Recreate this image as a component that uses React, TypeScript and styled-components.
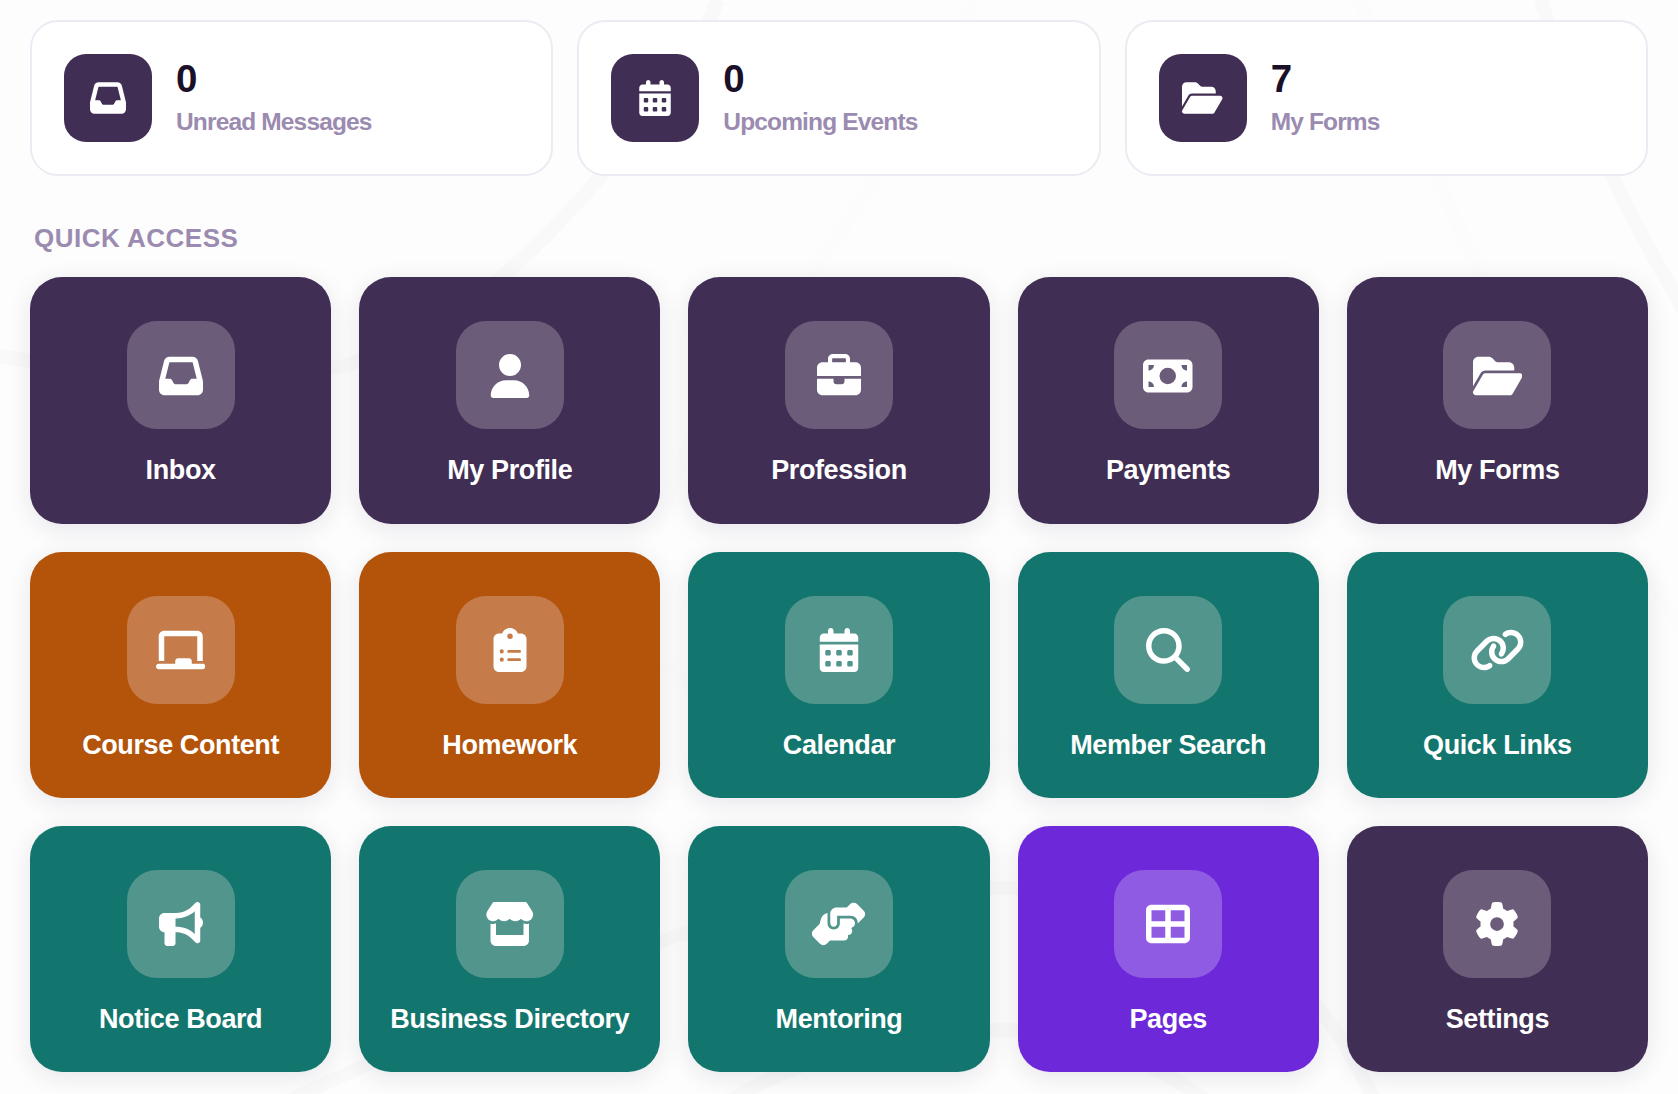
import React from 'react';
import styled, { createGlobalStyle } from 'styled-components';
import type { IconType } from 'react-icons';
import {
  FaInbox, FaCalendarDays, FaFolderOpen, FaUser, FaBriefcase, FaMoneyBill, FaChalkboard,
  FaClipboardList, FaMagnifyingGlass, FaLink, FaBullhorn, FaStore, FaHandshakeAngle,
  FaTableCellsLarge, FaGear,
} from 'react-icons/fa6';

const GlobalStyle = createGlobalStyle`
  *, *::before, *::after { box-sizing: border-box; }
  body {
    margin: 0;
    background: #fdfdfd;
    font-family: "Liberation Sans", Arial, Helvetica, sans-serif;
  }
`;

const Page = styled.main`
  position: relative;
  height: 1094px;
  padding: 20px 30px 0;
  overflow: hidden;
`;

const Backdrop = styled.svg`
  position: absolute;
  inset: 0;
  width: 100%;
  height: 100%;
  fill: none;
  stroke: #f9f9f9;
  stroke-width: 14px;
`;

const Content = styled.div`
  position: relative;
`;

const Stats = styled.section`
  display: grid;
  grid-template-columns: repeat(3, 1fr);
  gap: 24px;
`;

const StatCard = styled.article`
  display: flex;
  align-items: center;
  gap: 24px;
  height: 156px;
  padding: 0 32px;
  border: 2px solid #eeeaf3;
  border-radius: 28px;
  background: #fff;
`;

/* Glyphs share a 1em height; wide ones (576 or 640 units) overflow the 1em square. */
const IconBox = styled.div<{ $units?: number }>`
  display: flex;
  align-items: center;
  justify-content: center;
  flex-shrink: 0;

  svg {
    width: ${(p) => (p.$units ?? 512) / 512}em;
    height: 1em;
  }
`;

const StatIcon = styled(IconBox)`
  width: 88px;
  height: 88px;
  border-radius: 22px;
  background: #412e54;
  color: #fff;
  font-size: 36px;
`;

const StatText = styled.div`
  display: flex;
  flex-direction: column;
  gap: 9px;
`;

const StatValue = styled.strong`
  color: #1a1028;
  font-size: 38.5px;
  line-height: 39px;
`;

const StatLabel = styled.span`
  color: #9b8bb0;
  font-size: 24.5px;
  font-weight: 700;
  line-height: 30px;
  letter-spacing: -0.85px;
`;

const SectionTitle = styled.h2`
  margin: 47px 0 24.45px 4px;
  color: #9b8bb0;
  font-size: 26px;
  font-weight: 700;
  line-height: 30px;
  letter-spacing: 0.5px;
`;

const TileIcon = styled(IconBox)<{ $color: string }>`
  width: 108px;
  height: 108px;
  border-radius: 30px;
  background: ${(p) => p.$color};
  font-size: 44px;
`;

const Tile = styled.a<{ $color: string }>`
  display: flex;
  flex-direction: column;
  align-items: center;
  gap: 24px;
  padding-top: 44px;
  border-radius: 32px;
  background: ${(p) => p.$color};
  box-shadow: 0 5px 24px rgba(26, 16, 60, 0.1);
  color: #fff;
`;

const Tiles = styled.section`
  display: grid;
  grid-template-columns: repeat(5, 1fr);
  grid-auto-rows: 246.1px;
  gap: 28px;

  ${Tile}:nth-child(-n + 5) ${TileIcon} {
    padding-top: 1.5px;
  }
`;

const TileLabel = styled.span`
  font-size: 27px;
  font-weight: 700;
  line-height: 34px;
  letter-spacing: -0.4px;
  white-space: nowrap;
`;

interface Tone {
  base: string;
  chip: string;
}

interface Glyph {
  icon: IconType;
  units?: number;
}

const PLUM: Tone = { base: '#412e54', chip: '#6b5d7a' };
const ORANGE: Tone = { base: '#b4530a', chip: '#c57b4a' };
const TEAL: Tone = { base: '#13766e', chip: '#52958d' };
const VIOLET: Tone = { base: '#6d28d9', chip: '#8f5be2' };

const stats: (Glyph & { value: number; label: string })[] = [
  { icon: FaInbox, value: 0, label: 'Unread Messages' },
  { icon: FaCalendarDays, value: 0, label: 'Upcoming Events' },
  { icon: FaFolderOpen, units: 576, value: 7, label: 'My Forms' },
];

const tiles: (Glyph & { label: string; tone: Tone })[] = [
  { icon: FaInbox, label: 'Inbox', tone: PLUM },
  { icon: FaUser, label: 'My Profile', tone: PLUM },
  { icon: FaBriefcase, label: 'Profession', tone: PLUM },
  { icon: FaMoneyBill, units: 576, label: 'Payments', tone: PLUM },
  { icon: FaFolderOpen, units: 576, label: 'My Forms', tone: PLUM },
  { icon: FaChalkboard, units: 576, label: 'Course Content', tone: ORANGE },
  { icon: FaClipboardList, label: 'Homework', tone: ORANGE },
  { icon: FaCalendarDays, label: 'Calendar', tone: TEAL },
  { icon: FaMagnifyingGlass, label: 'Member Search', tone: TEAL },
  { icon: FaLink, units: 640, label: 'Quick Links', tone: TEAL },
  { icon: FaBullhorn, label: 'Notice Board', tone: TEAL },
  { icon: FaStore, units: 576, label: 'Business Directory', tone: TEAL },
  { icon: FaHandshakeAngle, units: 640, label: 'Mentoring', tone: TEAL },
  { icon: FaTableCellsLarge, label: 'Pages', tone: VIOLET },
  { icon: FaGear, label: 'Settings', tone: PLUM },
];

export default function App() {
  return (
    <>
      <GlobalStyle />
      <Page>
        <Backdrop viewBox="0 0 1678 1094" aria-hidden="true">
          <path d="M-10 354Q170 390 345 366Q440 335 507 272Q550 235 602 175Q680 90 718 0" />
          <path stroke="#fcfcfc" d="M975 0Q935 90 875 180L812 275Q700 390 660 520M664 665Q780 760 1000 745Q1180 740 1330 835" />
          <path stroke="#fcfcfc" d="M1360 0Q1395 95 1438 180L1482 278Q1540 400 1622 535L1684 630" />
          <path d="M1541 0Q1570 95 1614 180Q1640 235 1684 310" />
          <path d="M290 1100Q480 1010 675 936Q840 888 1005 888Q1240 890 1335 1030Q1355 1060 1375 1100" />
          <path d="M730 1100Q850 1030 1005 1030Q1110 1030 1205 1100" />
        </Backdrop>
        <Content>
          <Stats>
            {stats.map(({ icon: Icon, units, value, label }) => (
              <StatCard key={label}>
                <StatIcon $units={units}><Icon /></StatIcon>
                <StatText>
                  <StatValue>{value}</StatValue>
                  <StatLabel>{label}</StatLabel>
                </StatText>
              </StatCard>
            ))}
          </Stats>
          <SectionTitle>QUICK ACCESS</SectionTitle>
          <Tiles>
            {tiles.map(({ icon: Icon, units, label, tone }) => (
              <Tile key={label} $color={tone.base}>
                <TileIcon $units={units} $color={tone.chip}><Icon /></TileIcon>
                <TileLabel>{label}</TileLabel>
              </Tile>
            ))}
          </Tiles>
        </Content>
      </Page>
    </>
  );
}
